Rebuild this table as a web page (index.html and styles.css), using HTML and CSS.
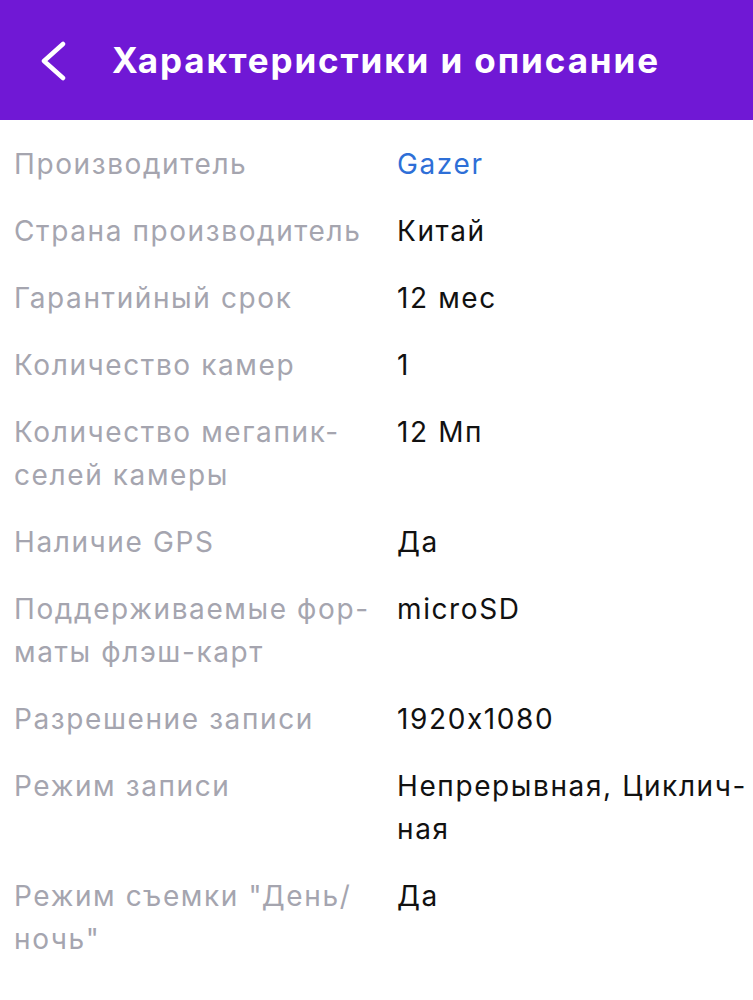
FILE: index.html
```html
<!DOCTYPE html>
<html lang="ru">
<head>
<meta charset="utf-8">
<link rel="stylesheet" href="styles.css">
</head>
<body>
<header class="topbar">
  <svg class="back" width="26" height="40" viewBox="0 0 26 40"><path d="M23 3 L4 20 L23 37" fill="none" stroke="#fff" stroke-width="4.5" stroke-linecap="round" stroke-linejoin="round"/></svg>
  <h1 class="title">Характеристики и описание</h1>
</header>
<main class="specs">
  <div class="row"><div class="label">Производитель</div><div class="value link">Gazer</div></div>
  <div class="row"><div class="label">Страна производитель</div><div class="value">Китай</div></div>
  <div class="row"><div class="label">Гарантийный срок</div><div class="value">12 мес</div></div>
  <div class="row"><div class="label">Количество камер</div><div class="value">1</div></div>
  <div class="row"><div class="label">Количество мегапик-<br>селей камеры</div><div class="value">12 Мп</div></div>
  <div class="row"><div class="label">Наличие GPS</div><div class="value">Да</div></div>
  <div class="row"><div class="label">Поддерживаемые фор-<br>маты флэш-карт</div><div class="value">microSD</div></div>
  <div class="row"><div class="label">Разрешение записи</div><div class="value">1920x1080</div></div>
  <div class="row"><div class="label">Режим записи</div><div class="value">Непрерывная, Циклич-<br>ная</div></div>
  <div class="row"><div class="label">Режим съемки "День/<br>ночь"</div><div class="value">Да</div></div>
</main>
</body>
</html>
```
FILE: styles.css
```css
* { box-sizing: border-box; }
html, body { margin: 0; padding: 0; background: #fff; }
body {
  font-family: Inter, "Noto Sans", sans-serif;
  font-feature-settings: "calt" 0;
}
.topbar {
  height: 120px;
  background: #7018d5;
  display: flex;
  align-items: center;
  padding-left: 40px;
}
.back { display: block; margin-top: 2px; }
.title {
  margin: 0 0 0 46px;
  color: #fff;
  font-size: 35px;
  font-weight: 700;
  letter-spacing: 1.9px;
  white-space: nowrap;
}
.specs { padding: 11px 0 0 14px; }
.row {
  display: grid;
  grid-template-columns: 383px 1fr;
  padding: 12px 0;
  font-size: 28px;
  line-height: 43px;
  letter-spacing: 1.6px;
}
.label { color: #a5a5af; white-space: nowrap; }
.value { color: #111; white-space: nowrap; }
.link { color: #2e6fd7; }
```
